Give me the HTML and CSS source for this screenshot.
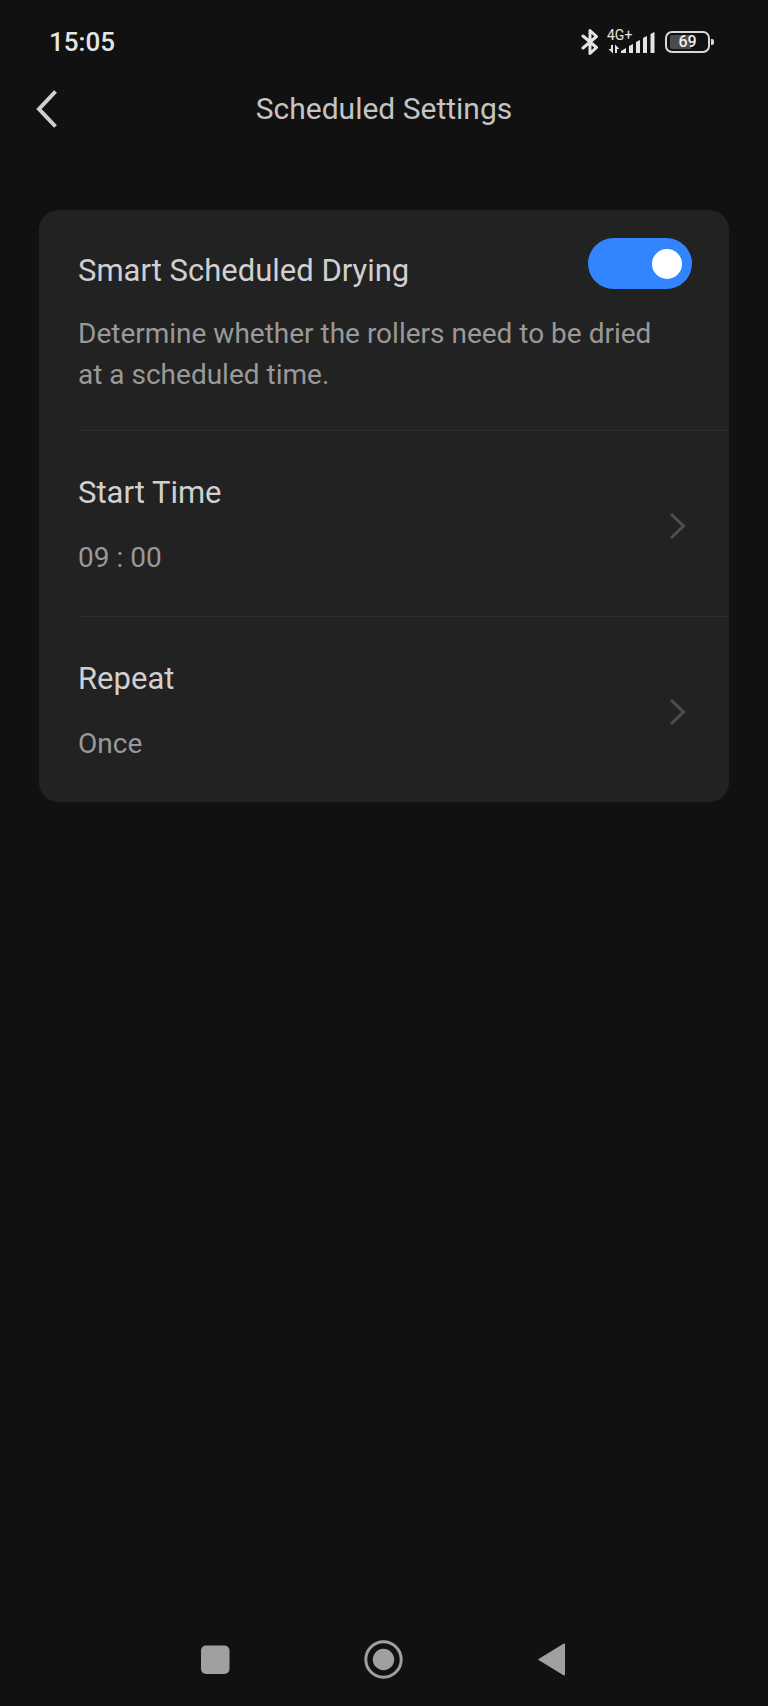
FILE: index.html
```
<!DOCTYPE html>
<html lang="en">
	<head>
		<meta charset="UTF-8">
		<meta name="viewport" content="width=device-width, initial-scale=1">
		<title>Scheduled Settings</title>
		<link rel="stylesheet" href="styles.css">
	</head>
	<body>
		<div class="status-bar">
			<span class="clock">15:05</span>
			<div class="status-icons">
				<svg class="bluetooth" width="18" height="28" viewBox="0 0 18 28" aria-hidden="true">
					<path d="M2 8L15.500 19.500L9 25.500V2.500L15.500 8.500L2 20" />
				</svg>
				<svg class="signal" width="50" height="28" viewBox="0 0 50 28" aria-hidden="true">
					<text x="0" y="12">4G+</text>
					<path d="M4 17h2v8.500L1.500 21H4zM8 25V16.500L12.500 21H10v4z" />
					<path d="M14 25v-2l5-3v5zM22 25v-7l4-2v9zM29 25V14l4-2v13zM36 25V10l4-2v17zM43.500 25V6l4-2v21z" />
				</svg>
				<div class="battery"><span>69</span></div>
			</div>
		</div>

		<header class="header">
			<button class="back" type="button" aria-label="Back">
				<svg width="22" height="38" viewBox="0 0 22 38"><path d="M19.500 1.500L3 19L19.500 36.500" /></svg>
			</button>
			<h1>Scheduled Settings</h1>
		</header>

		<main class="card">
			<div class="row row-switch">
				<div class="row-top">
					<label class="title" for="drying">Smart Scheduled Drying</label>
					<input class="switch" type="checkbox" role="switch" id="drying" checked>
				</div>
				<p class="desc">Determine whether the rollers need to be dried at a scheduled time.</p>
			</div>
			<button class="row row-link" type="button">
				<span class="row-text">
					<span class="title">Start Time</span>
					<span class="value">09 : 00</span>
				</span>
				<svg class="arrow" width="18" height="28" viewBox="0 0 18 28" aria-hidden="true"><path d="M2 2L14.500 14L2 26" /></svg>
			</button>
			<button class="row row-link" type="button">
				<span class="row-text">
					<span class="title">Repeat</span>
					<span class="value">Once</span>
				</span>
				<svg class="arrow" width="18" height="28" viewBox="0 0 18 28" aria-hidden="true"><path d="M2 2L14.500 14L2 26" /></svg>
			</button>
		</main>

		<nav class="nav-bar">
			<button type="button" aria-label="Recent apps">
				<svg width="40" height="40" viewBox="0 0 40 40"><rect x="5" y="5.500" width="28.500" height="28.500" rx="5" /></svg>
			</button>
			<button type="button" aria-label="Home">
				<svg width="40" height="40" viewBox="0 0 40 40">
					<circle class="ring" cx="19.500" cy="19.500" r="17.700" />
					<circle cx="19.500" cy="19.500" r="10.700" />
				</svg>
			</button>
			<button type="button" aria-label="Back">
				<svg width="40" height="40" viewBox="0 0 40 40"><path class="triangle" d="M7.500 19.500L32 4.500V34.500z" /></svg>
			</button>
		</nav>
	</body>
</html>
```
FILE: styles.css
```
* {
	box-sizing: border-box;
}

body {
	margin: 0;
	min-height: 100vh;
	display: flex;
	flex-direction: column;
	background: #111;
	color: #d0d0d0;
	font-family: Roboto, "Liberation Sans", sans-serif;
}

button {
	margin: 0;
	padding: 0;
	border: 0;
	background: none;
	color: inherit;
	font: inherit;
	text-align: left;
}

svg {
	display: block;
	flex: none;
}

/* status bar */
.status-bar {
	display: flex;
	align-items: center;
	justify-content: space-between;
	height: 84px;
	padding: 0 53px 0 49px;
}

.clock {
	color: #e4e4e4;
	font-size: 26px;
	font-weight: 500;
	line-height: 32px;
}

.status-icons {
	display: flex;
	align-items: center;
	gap: 8px;
}

.bluetooth path {
	fill: none;
	stroke: #e4e4e4;
	stroke-width: 3;
	stroke-linejoin: round;
	stroke-linecap: round;
}

.signal {
	fill: #e4e4e4;
	font-size: 14px;
}

.battery {
	position: relative;
	display: flex;
	align-items: center;
	justify-content: center;
	width: 45px;
	height: 22px;
	margin-right: 5px;
	border: 2px solid #d8d8d8;
	border-radius: 7px;
	background: linear-gradient(90deg, #4c4c4c 60%, #111 60%) content-box;
	padding: 2px 3px;
	color: #eee;
	font-size: 16px;
	font-weight: 500;
	line-height: 16px;
}

.battery::after {
	content: "";
	position: absolute;
	top: 6px;
	right: -6px;
	width: 3px;
	height: 6px;
	border-radius: 0 2px 2px 0;
	background: #d8d8d8;
}

/* page header */
.header {
	display: grid;
	grid-template-columns: 48px 1fr 48px;
	align-items: center;
	height: 50px;
	padding: 0 36px;
}

.back path {
	fill: none;
	stroke: #d0d0d0;
	stroke-width: 4;
}

h1 {
	margin: 0;
	color: #c4c4c4;
	font-size: 30px;
	font-weight: 400;
	line-height: 40px;
	text-align: center;
}

/* settings */
.card {
	display: flex;
	flex-direction: column;
	margin: 76px 39px 0;
	border-radius: 20px;
	background: #222;
}

.row {
	margin-left: 39px;
}

.row + .row {
	border-top: 1px solid #2e2e2e;
}

.row-switch {
	padding: 28px 37px 35px 0;
}

.row-top {
	display: flex;
	align-items: flex-start;
	justify-content: space-between;
}

.row-top .title {
	padding-top: 13px;
}

.title {
	font-size: 31px;
	line-height: 40px;
}

.desc,
.value {
	margin: 0;
	color: #999;
	font-size: 28px;
	line-height: 41px;
}

.desc {
	margin-top: 22px;
	padding-right: 40px;
}

.switch {
	appearance: none;
	flex: none;
	display: flex;
	align-items: center;
	width: 104px;
	height: 51px;
	margin: 0;
	padding: 0 10px;
	border-radius: 26px;
	background: #555;
}

.switch::before {
	content: "";
	width: 30px;
	height: 30px;
	border-radius: 50%;
	background: #fff;
}

.switch:checked {
	justify-content: flex-end;
	background: #3385ff;
}

.row-link {
	display: flex;
	align-items: center;
	justify-content: space-between;
	padding: 42px 42px 38px 0;
}

.row-text {
	display: flex;
	flex-direction: column;
	gap: 24px;
}

.arrow path {
	fill: none;
	stroke: #4e4e4e;
	stroke-width: 3;
}

/* system navigation */
.nav-bar {
	display: flex;
	justify-content: center;
	height: 92px;
	margin-top: auto;
}

.nav-bar button {
	display: flex;
	align-items: center;
	justify-content: center;
	width: 168px;
}

.nav-bar svg {
	fill: #a0a0a0;
}

.nav-bar .ring {
	fill: none;
	stroke: #a0a0a0;
	stroke-width: 3;
}

.nav-bar .triangle {
	stroke: #a0a0a0;
	stroke-width: 2;
	stroke-linejoin: round;
}
```
